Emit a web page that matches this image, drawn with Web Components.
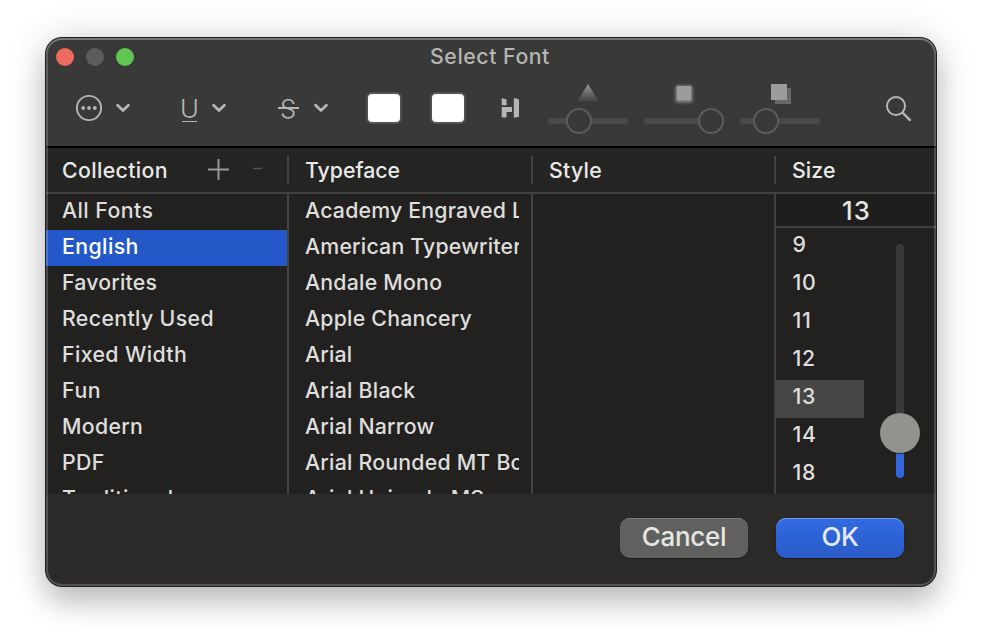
<!DOCTYPE html>
<html lang="en"><head><meta charset="utf-8"><title>Select Font</title>
<style>body{margin:0;background:#fff;font-family:Inter,"Liberation Sans",sans-serif}</style></head>
<body>
<font-window>
  <window-toolbar slot="toolbar" label="Select Font"></window-toolbar>
  <font-column slot="columns" label="Collection" class="collection" style="--hls:.37px" tools>
    <font-row style="--ls:.52px">All Fonts</font-row>
    <font-row style="--ls:.52px" selected>English</font-row>
    <font-row style="--ls:.3px">Favorites</font-row>
    <font-row style="--ls:.46px">Recently Used</font-row>
    <font-row style="--ls:.48px">Fixed Width</font-row>
    <font-row style="--ls:.7px">Fun</font-row>
    <font-row style="--ls:.42px">Modern</font-row>
    <font-row style="--ls:.5px">PDF</font-row>
    <font-row style="--ls:.48px">Traditional</font-row>
  </font-column>
  <font-column slot="columns" label="Typeface" style="--hls:0px">
    <font-row style="--ls:.3px">Academy Engraved LET</font-row>
    <font-row style="--ls:.3px">American Typewriter</font-row>
    <font-row style="--ls:.33px">Andale Mono</font-row>
    <font-row style="--ls:.32px">Apple Chancery</font-row>
    <font-row style="--ls:.3px">Arial</font-row>
    <font-row style="--ls:.34px">Arial Black</font-row>
    <font-row style="--ls:.32px">Arial Narrow</font-row>
    <font-row style="--ls:.32px">Arial Rounded MT Bold</font-row>
    <font-row style="--ls:.32px">Arial Unicode MS</font-row>
  </font-column>
  <font-column slot="columns" label="Style" style="--hls:.25px"></font-column>
  <font-column slot="columns" label="Size" style="--hls:.11px" last>
    <size-picker value="13"></size-picker>
  </font-column>
  <push-button slot="actions" style="--ls:-.3px">Cancel</push-button>
  <push-button slot="actions" style="--ls:-.5px" primary>OK</push-button>
</font-window>
<script>
const define=(name,html)=>customElements.define(name,class extends HTMLElement{
  connectedCallback(){
    if(this.shadowRoot)return;
    const t=document.createElement('template');
    t.innerHTML=typeof html==='function'?html(this):html;
    this.attachShadow({mode:'open'}).append(t.content.cloneNode(true));
  }
});

define('font-window',`<style>
:host{display:block;box-sizing:border-box;width:982px;height:640px;padding:38px 46px 54px;overflow:hidden}
.frame{position:relative;width:890px;height:548px;border-radius:16px;background:#2b2a28;
 box-shadow:0 0 0 1px #1c1d1e,0 18px 28px rgba(0,0,0,.18),0 2px 38px rgba(0,0,0,.18)}
.clip{display:flex;flex-direction:column;height:100%;border-radius:16px;overflow:hidden}
.columns{display:grid;grid-template-columns:243px 244px 243px 160px;height:346px;flex:none;background:#222120}
.actions{display:flex;justify-content:flex-end;gap:28px;padding:24px 32px 0}
.frame::after{content:"";position:absolute;inset:0;border-radius:16px;pointer-events:none;
 box-shadow:inset 0 0 0 2px rgba(255,255,255,.19),inset 0 2px 0 rgba(255,255,255,.16)}
</style>
<div class="frame"><div class="clip"><slot name="toolbar"></slot><div class="columns"><slot name="columns"></slot></div>
<div class="actions"><slot name="actions"></slot></div></div></div>`);

define('window-toolbar',e=>`<style>
:host{display:block;flex:none;box-sizing:border-box;height:110px;background:#393937;border-bottom:2px solid #000;color:#b5b5b3}
.title{display:grid;grid-template-columns:1fr auto 1fr;height:36px;padding-left:10px}
.lights{display:flex;gap:12px;padding-top:10px}
.lights i{width:18px;height:18px;border-radius:50%;background:#5c5c5a}
.lights .close{background:#ec6a5e}.lights .zoom{background:#61c554}
h1{margin:0;padding:2px 0 0;font:450 21.3px/33px Inter,sans-serif;letter-spacing:.52px;text-indent:-12px}
.tools{display:flex;align-items:center;height:68px;padding-left:29px}
tool-swatch+tool-swatch{margin-left:28px}
</style>
<div class="title"><div class="lights"><i class="close"></i><i></i><i class="zoom"></i></div><h1>${e.getAttribute('label')}</h1></div>
<div class="tools">
<tool-menu kind="more"></tool-menu>
<tool-menu kind="under" style="margin-left:50px"></tool-menu>
<tool-menu kind="strike" style="margin-left:51px"></tool-menu>
<tool-swatch style="margin-left:38px"></tool-swatch><tool-swatch></tool-swatch>
<svg width="20" height="22" viewBox="500 97 20 22" style="margin-left:34px" fill="#b5b5b3">
<path d="M501.7 98l3 1 1.9.7v5.5h-4.9zM501.7 107H512v4.9h-5.4v5.2l-2 .7-2.9-.5zM513.8 98.8l1-.8 4.2 1.4v17.4l-4.2.9-1-.8z"/></svg>
<effect-slider kind="blurred" at="31" style="margin-left:28px"></effect-slider>
<effect-slider kind="glow" at="67" style="margin-left:16px"></effect-slider>
<effect-slider kind="offset" at="26" style="margin-left:16px"></effect-slider>
<svg width="28" height="28" viewBox="884 92 28 28" style="margin-left:64px" fill="none" stroke="#b5b5b3"><circle cx="896" cy="104" r="9" stroke-width="2"/><path d="M902.8 110.8l7 7" stroke-width="2.6" stroke-linecap="round"/></svg>
</div>`);

define('tool-menu',e=>{
 const k=e.getAttribute('kind');
 const glyph={more:`<svg width="28" height="28" viewBox="0 0 28 28"><circle cx="14" cy="14" r="12.1" fill="none" stroke="currentColor" stroke-width="1.9"/><g fill="currentColor"><circle cx="8.2" cy="14" r="1.9"/><circle cx="14" cy="14" r="1.9"/><circle cx="19.8" cy="14" r="1.9"/></g></svg>`,
 under:'<span class="g">U</span>',strike:'<span class="g">S</span>'}[k];
 return `<style>
:host{display:flex;align-items:center;height:28px;gap:${k==='strike'?15:13}px}
.g{position:relative;width:${k==='under'?19:22}px;text-align:center;font:300 25.7px/27px Inter,sans-serif}
.g::after{content:"";position:absolute;background:#b5b5b3;${k==='under'?'left:2px;right:2px;top:26px;height:1.5px':'left:1px;right:0;top:12.5px;height:1.5px'}}
svg{display:block}
</style>${glyph}<svg width="14" height="10" viewBox="0 0 14 10"><path d="M1.6 2.2L7 7.4l5.4-5.2" fill="none" stroke="currentColor" stroke-width="2.8" stroke-linecap="round" stroke-linejoin="round"/></svg>`});

define('tool-swatch',`<style>:host{display:block;box-sizing:border-box;width:36px;height:32px;border:2px solid #525250;border-radius:6px;background:#525250}
i{display:block;height:28px;border-radius:4px;background:#fff}</style><i></i>`);

define('effect-slider',e=>`<style>
:host{display:flex;flex-direction:column;width:80px;height:68px;align-items:stretch}
svg{display:block}
</style><svg width="80" height="68" viewBox="0 74 80 68">
<defs><linearGradient id="fade" x2="0" y2="1"><stop stop-color="#999997"/><stop offset="1" stop-color="#444442"/></linearGradient><filter id="soft" x="-50%" y="-50%" width="200%" height="200%"><feGaussianBlur stdDeviation="1.8"/></filter></defs>
${{blurred:'<path d="M40 84l10.3 17H29.7z" fill="url(#fade)"/>',
glow:'<rect x="31.5" y="85.5" width="17" height="17" rx="2" fill="#8a8a88" filter="url(#soft)"/><rect x="33" y="86" width="14" height="14" fill="#9c9c9a"/>',
offset:'<path d="M35 88h16v16H35z" fill="#686866"/><path d="M31 84h16v16H31z" fill="#9c9c9a"/>'}[e.getAttribute('kind')]}
<rect y="118" width="80" height="6" rx="3" fill="#4a4a48"/><circle cx="${e.getAttribute('at')}" cy="121" r="12" fill="#393937" stroke="#5c5c5a" stroke-width="2"/></svg>`);

define('font-column',e=>`<style>
:host{display:flex;flex-direction:column;min-width:0;height:346px;overflow:hidden}
header{display:flex;align-items:center;flex:none;box-sizing:border-box;height:46px;border-bottom:2px solid #40403f;background:#242422;color:#e9e9e7;
 padding-left:16px;font:500 21.3px/44px Inter,sans-serif;letter-spacing:var(--hls,0)}
header svg{margin-left:40px}
header::after{content:"";width:2px;height:28px;margin-left:auto;background:#424241}
.body{flex:1;min-height:0;box-sizing:border-box;border-right:2px solid #424241;overflow:hidden}
:host([last]) header::after{display:none}
:host([last]) .body{border:0}
</style><header>${e.getAttribute('label')}${e.hasAttribute('tools')?'<svg width="56" height="22" viewBox="0 0 56 22" fill="none"><path d="M10.5 0v21M0 10.5h21" stroke="#989896" stroke-width="2"/><path d="M45 9.5h9" stroke="#545452" stroke-width="1.3"/></svg>':''}</header>
<div class="body"><slot></slot></div>`);

define('font-row',`<style>
:host{display:block;box-sizing:border-box;height:36px;padding:0 12px 0 16px;color:#dededc;font:450 21.3px/32.5px Inter,sans-serif;letter-spacing:calc(var(--ls,0px) - .1px)}
:host([selected]){background:#2458c9;color:#fff}
div{height:36px;overflow:hidden;white-space:nowrap}
</style><div><slot></slot></div>`);

define('size-picker',e=>`<style>
:host{display:grid;grid-template:34px 1fr/88px 1fr;height:300px}
.value{grid-column:1/3;border-bottom:2px solid #40403f;background:#1e1e1e;color:#e4e4e2;text-align:center;font:450 25.7px/33px Inter,sans-serif;height:32px;letter-spacing:1px;padding-left:1px}
.row{height:38px;padding-left:16.5px;color:#dededc;font:450 21.3px/32.5px Inter,sans-serif;letter-spacing:.6px}
.row.on{background:#464645}
svg{display:block}
</style><div class="value">${e.getAttribute('value')}</div>
<div>${[9,10,11,12,13,14,18].map(n=>`<div class="row${n==e.getAttribute('value')?' on':''}">${n}</div>`).join('')}</div>
<svg width="71" height="266" viewBox="864 228 71 266"><rect x="896" y="244" width="8" height="200" rx="4" fill="#393938"/><path d="M896 440h8v34a4 4 0 0 1-8 0z" fill="#3166dd"/><circle cx="900" cy="433.5" r="20.3" fill="#171716"/><circle cx="900" cy="433" r="20" fill="#92928f"/></svg>`);

define('push-button',`<style>
:host{display:block;box-sizing:border-box;width:128px;height:40px;border-radius:10px;background:#60605e;color:#e6e6e4;text-align:center;
 font:450 26px/37px Inter,sans-serif;letter-spacing:var(--ls,0);box-shadow:inset 0 1px 0 #7b7b79,0 1px 1px rgba(0,0,0,.35)}
:host([primary]){background:linear-gradient(#326ae2,#2a5bc8);color:#e4eafb;box-shadow:inset 0 1px 0 #6f9aec,0 1px 1px rgba(0,0,0,.35)}
</style><slot></slot>`);
</script>
</body></html>
